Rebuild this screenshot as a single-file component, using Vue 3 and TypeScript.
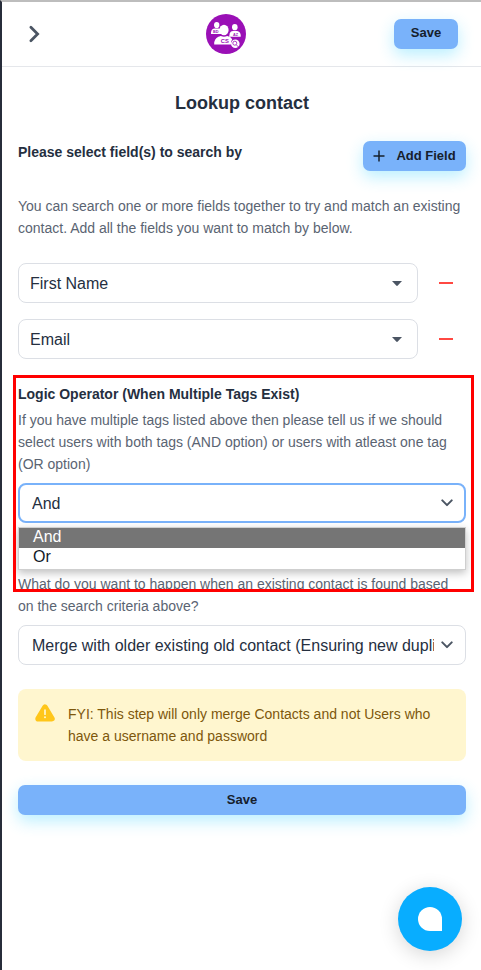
<script setup lang="ts">
import { ref } from 'vue'

const fields = ref<string[]>(['First Name', 'Email'])
const operators: string[] = ['And', 'Or']
const operator = ref<string>('And')

function removeField(index: number): void {
  fields.value.splice(index, 1)
}
</script>

<template>
  <div class="panel">
    <header class="header">
      <svg class="back" width="20" height="20" viewBox="0 0 20 20">
        <path d="M6.9 3.3 13.6 10 6.9 16.7" fill="none" stroke="#4b5563" stroke-width="2.8" stroke-linecap="round" />
      </svg>
      <svg class="logo" width="40" height="40" viewBox="0 0 40 40">
        <circle cx="20" cy="20" r="20" fill="#9a10b6" />
        <g fill="#fff">
          <ellipse cx="10.7" cy="11" rx="2.7" ry="3.1" />
          <path d="M5 20v-1.6q.3-3.7 4-3.9h3.5q1.8 0 2.7 1.2-.8 2.5.3 4.3z" />
          <ellipse cx="28.8" cy="13.2" rx="2.8" ry="3.1" />
          <path d="M23 22.7q.6-1.5.7-3.4 1-2.1 3.2-2.2h4.2q3.2.5 3.6 4v1.6z" />
          <ellipse cx="18" cy="16" rx="4.6" ry="5.2" />
          <path d="M8.2 30.6v-2.3q1.3-5.6 6.6-6.3 3.2 1.5 6.4 0 3.4.5 5 3.2-1.9 2.3-.7 5.4z" />
          <circle cx="29.3" cy="29.8" r="4.3" />
        </g>
        <g fill="none" stroke="#9a10b6" stroke-width=".8">
          <circle cx="28.8" cy="29.2" r="2" />
          <path d="m30.3 30.8 2.3 2.3" />
        </g>
        <g class="logo-text">
          <text x="14.8" y="29" font-size="5.8">CS</text>
          <text x="7" y="19" font-size="3.8">BD</text>
          <text x="27" y="22" font-size="3.8">AZ</text>
        </g>
      </svg>
      <button class="btn btn-top">Save</button>
    </header>

    <main class="content">
      <h1 class="title">Lookup contact</h1>

      <div class="search-head">
        <h2 class="label">Please select field(s) to search by</h2>
        <button class="btn btn-add">
          <svg width="12" height="12" viewBox="0 0 12 12">
            <path d="M6 .5v11M.5 6h11" stroke="#16202c" stroke-width="1.5" />
          </svg>
          <span>Add Field</span>
        </button>
      </div>

      <p class="text intro">
        You can search one or more fields together to try and match an existing<br />contact. Add all the fields you want to match by below.
      </p>

      <div class="fields">
        <div v-for="(field, i) in fields" :key="field" class="field-row">
          <div class="box field">
            <span class="field-name">{{ field }}</span>
            <svg width="10" height="5" viewBox="0 0 10 5"><path d="M0 0h10L5.8 4.6q-.8.7-1.6 0z" fill="#4b5563" /></svg>
          </div>
          <button class="remove" aria-label="Remove" @click="removeField(i)"></button>
        </div>
      </div>

      <section class="logic">
        <h2 class="label">Logic Operator (When Multiple Tags Exist)</h2>
        <p class="text">
          If you have multiple tags listed above then please tell us if we should<br />select users with both tags (AND option) or users with atleast one tag<br />(OR option)
        </p>
        <div class="box select open">
          <span class="value">{{ operator }}</span>
          <svg width="12" height="8" viewBox="0 0 12 8"><path d="m1.3 1.4 4.7 4.7 4.7-4.7" fill="none" stroke="#4b5563" stroke-width="2" stroke-linecap="round" stroke-linejoin="round" /></svg>
        </div>
        <ul class="menu">
          <li v-for="o in operators" :key="o" :class="{ active: o === operator }" @click="operator = o">{{ o }}</li>
        </ul>
        <div class="frame"></div>
      </section>

      <section class="existing">
        <p class="text">
          What do you want to happen when an existing contact is found based<br />on the search criteria above?
        </p>
        <div class="box select">
          <span class="value">Merge with older existing old contact (Ensuring new duplicates)</span>
          <svg width="12" height="8" viewBox="0 0 12 8"><path d="m1.3 1.4 4.7 4.7 4.7-4.7" fill="none" stroke="#4b5563" stroke-width="2" stroke-linecap="round" stroke-linejoin="round" /></svg>
        </div>
      </section>

      <div class="notice">
        <svg width="20" height="18" viewBox="0 0 20 18">
          <path d="M10 3.2 16.9 14.7H3.1z" fill="#ffc61a" stroke="#ffc61a" stroke-width="5.6" stroke-linejoin="round" />
          <path d="M10 6v4.2" stroke="#fff6cf" stroke-width="1.7" stroke-linecap="round" />
          <circle cx="10" cy="13.2" r="1" fill="#fff6cf" />
        </svg>
        <p>FYI: This step will only merge Contacts and not Users who<br />have a username and password</p>
      </div>

      <button class="btn btn-wide">Save</button>
    </main>

    <button class="chat" aria-label="Chat"><span></span></button>
  </div>
</template>

<style>
body {
  background: #fff;
}
</style>

<style scoped>
.panel {
  position: relative;
  box-sizing: border-box;
  height: 970px;
  overflow: hidden;
  border-top: 2px solid #bdbdbd;
  border-left: 2px solid #272d3a;
  background: #fff;
  font-family: 'Liberation Sans', Arial, sans-serif;
  color: #252f3f;
}
.panel *,
.panel *::before {
  box-sizing: border-box;
}
.panel::before {
  content: '';
  position: absolute;
  top: -2px;
  left: -2px;
  right: 0;
  height: 1px;
  background: #f3f3f3;
}
h1,
h2,
p,
ul {
  margin: 0;
  padding: 0;
}
.header {
  display: grid;
  grid-template-columns: 182px 40px 1fr;
  align-items: center;
  height: 65px;
  padding: 0 21px 1px 22px;
  border-bottom: 1px solid #e5e7eb;
}
.logo {
  display: block;
}
.logo-text {
  fill: #9a10b6;
  font-weight: 700;
}
.btn {
  display: flex;
  align-items: center;
  justify-content: center;
  height: 30px;
  padding: 0 0 1px;
  border: 0;
  border-radius: 7px;
  background: #79b2fa;
  box-shadow: 0 6px 16px rgba(40, 205, 255, 0.32);
  color: #16202c;
  font: 700 13px/20px 'Liberation Sans', Arial, sans-serif;
}
.btn-top {
  justify-self: end;
  width: 64px;
  margin-right: 2px;
}
.content {
  padding: 0 15px 0 16px;
}
.title {
  padding-top: 24px;
  text-align: center;
  font-size: 18px;
  line-height: 24px;
}
.search-head {
  display: flex;
  justify-content: space-between;
  padding-top: 26px;
}
.label {
  font-size: 14px;
  line-height: 22px;
}
.btn-add {
  gap: 11px;
  width: 103px;
}
.text {
  color: #5a6472;
  font-size: 14px;
  line-height: 22px;
  white-space: nowrap;
}
.intro {
  padding-top: 24px;
}
.fields {
  display: grid;
  gap: 16px;
  padding-top: 24px;
}
.field-row {
  display: flex;
  align-items: center;
}
.box {
  display: flex;
  align-items: center;
  justify-content: space-between;
  height: 40px;
  border: 1px solid #dcdfe5;
  border-radius: 8px;
  font-size: 16px;
  line-height: 24px;
}
.field {
  width: 400px;
  padding: 0 15px 0 11px;
}
.field-name,
.value {
  padding-top: 2px;
}
.remove {
  width: 14px;
  height: 2px;
  margin-left: 21px;
  padding: 0;
  border: 0;
  background: #ff4842;
}
.logic {
  position: relative;
  padding-top: 24px;
}
.logic .text {
  padding: 4px 0 8px;
}
.select {
  padding: 0 12px 0 13px;
}
.value {
  width: 402px;
  overflow: hidden;
  white-space: nowrap;
}
.select.open {
  padding: 0 11px 0 12px;
  border: 2px solid #79b2fa;
}
.menu {
  position: absolute;
  top: 168px;
  left: 0;
  right: 0;
  z-index: 1;
  height: 43px;
  border: 1px solid #cfcfcf;
  background: #fff;
  box-shadow: 0 3px 8px rgba(0, 0, 0, 0.25);
  list-style: none;
}
.menu li {
  height: 20px;
  padding-left: 14px;
  color: #111827;
  font-size: 16px;
  line-height: 18px;
}
.menu .active {
  background: #757575;
  color: #fff;
}
.frame {
  position: absolute;
  top: 16px;
  left: -5px;
  z-index: 2;
  width: 461px;
  height: 217px;
  border: 3px solid #f00;
}
.existing {
  padding-top: 50px;
}
.existing .text {
  padding-bottom: 8px;
}
.notice {
  display: flex;
  gap: 13px;
  height: 72px;
  margin-top: 24px;
  padding: 14px 17px;
  border-radius: 8px;
  background: #fff6cf;
  color: #7d570c;
  font-size: 14px;
  line-height: 22px;
}
.notice svg {
  flex: none;
  margin-top: 1px;
}
.btn-wide {
  width: 100%;
  margin-top: 24px;
}
.chat {
  position: absolute;
  right: 19px;
  bottom: 19px;
  display: grid;
  place-items: center;
  width: 64px;
  height: 64px;
  padding: 0;
  border: 0;
  border-radius: 50%;
  background: #08adff;
  box-shadow: 0 4px 20px rgba(0, 0, 0, 0.16);
}
.chat span {
  width: 24px;
  height: 24px;
  border-radius: 50% 50% 0 50%;
  background: #fff;
}
</style>
